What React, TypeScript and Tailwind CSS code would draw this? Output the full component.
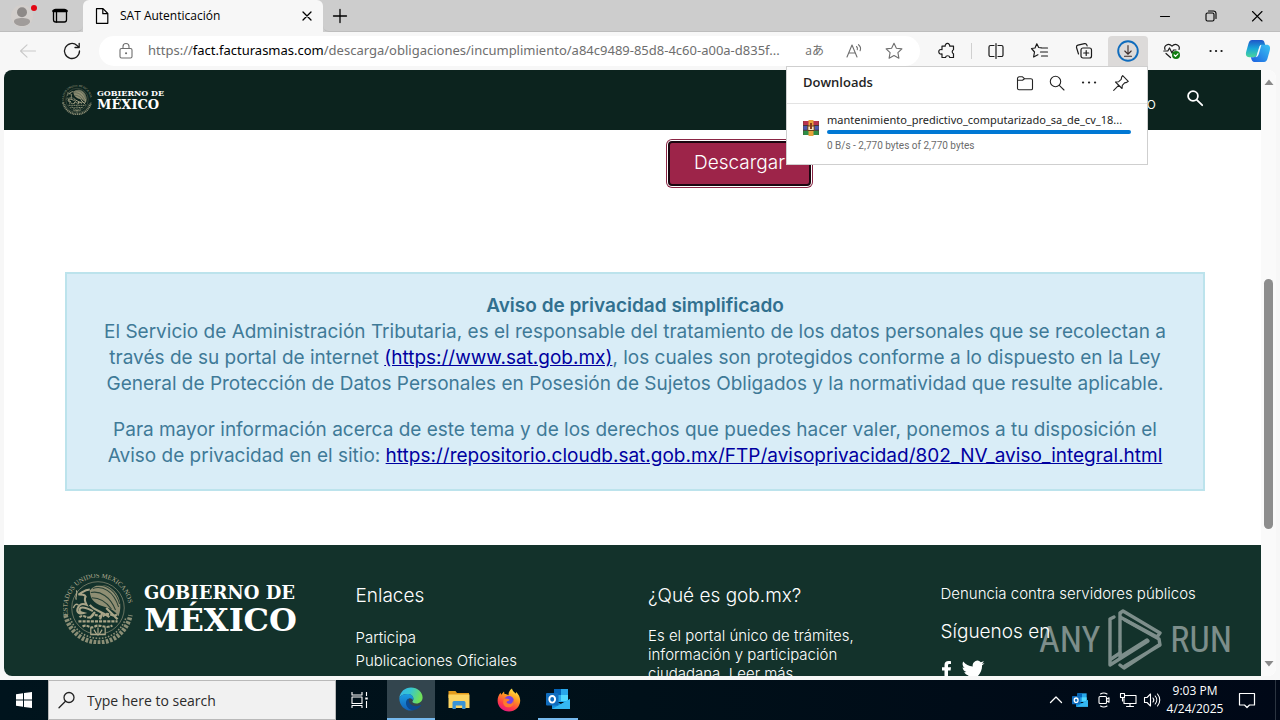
import type { ReactNode } from "react";

type IconProps = { className?: string; children: ReactNode; box?: string; width?: number };

function Icon({ className = "size-5", children, box = "0 0 20 20", width = 1.1 }: IconProps) {
  return (
    <svg
      className={"shrink-0 " + className}
      viewBox={box}
      fill="none"
      stroke="currentColor"
      strokeWidth={width}
      strokeLinecap="round"
      strokeLinejoin="round"
      aria-hidden="true"
    >
      {children}
    </svg>
  );
}

const STAR = "M10 2.2 12.4 7.2 17.9 7.9 13.9 11.7 14.9 17.2 10 14.6 5.1 17.2 6.1 11.7 2.1 7.9 7.6 7.2Z";

function TabStrip() {
  return (
    <div className="flex h-8 shrink-0 items-stretch bg-[#cdcdcd]">
      <div className="flex w-[83px] items-center rounded-br-md border-b border-[#bdbdbd] pl-[11px]">
        <button aria-label="Profile" className="relative size-[22px] rounded-full">
          <svg viewBox="0 0 22 22" className="size-[22px]">
            <circle cx="11" cy="11" r="11" fill="#d3cfcc" />
            <circle cx="11" cy="7.3" r="5" fill="#8d8987" />
            <path d="M3 16.5C3 13.8 7 13 11 13s8 .8 8 3.5S15 21 11 21s-8-1.800-8-4.500Z" fill="#a09c9a" />
          </svg>
          <span className="absolute top-0 -right-1 size-1.5 rounded-full bg-[#e30613]" />
        </button>
        <button aria-label="Tab actions" className="ml-[17px]">
          <Icon className="size-5" width={1.3}>
            <rect x="3.500" y="3.500" width="13" height="12.500" rx="2.200" />
            <path d="M3.500 5h13" strokeWidth="2.600" />
            <path d="M6.500 5.500v10.500" />
          </Icon>
        </button>
      </div>
      <div className="flex w-60 items-center rounded-t-md bg-[#f7f7f7] pr-2 pl-[9px]">
        <Icon className="size-5" width={1.2}>
          <path d="M4.500 2.700h6.500l4.800 4.800v9.800H4.500ZM10.800 2.900v4.800h4.800" />
        </Icon>
        <span className="ml-2 flex-1 text-[12px] text-black">SAT Autenticación</span>
        <button aria-label="Close tab">
          <Icon className="size-4" box="0 0 16 16" width={1.3}>
            <path d="m4 4 8 8M12 4l-8 8" />
          </Icon>
        </button>
      </div>
      <div className="flex flex-1 items-center justify-between rounded-bl-md border-b border-[#bdbdbd] pl-[7px]">
        <button aria-label="New tab">
          <Icon width={1.3}>
            <path d="M10 3.500v13M3.500 10h13" />
          </Icon>
        </button>
        <div className="flex items-center gap-[30px] pr-[15px]">
          <button aria-label="Minimize">
            <Icon className="size-4" box="0 0 16 16">
              <path d="M3.500 8.500h9" />
            </Icon>
          </button>
          <button aria-label="Restore">
            <Icon className="size-4" box="0 0 16 16">
              <rect x="3" y="5" width="8" height="8" rx="1.500" />
              <path d="M5.500 3h5A2.500 2.500 0 0 1 13 5.500v5" />
            </Icon>
          </button>
          <button aria-label="Close">
            <Icon className="size-4" box="0 0 16 16">
              <path d="m3.500 3.500 9.500 9.500M13 3.500 3.500 13" />
            </Icon>
          </button>
        </div>
      </div>
    </div>
  );
}

function DownloadsPopup() {
  return (
    <section
      aria-label="Downloads"
      className="absolute top-full right-0 z-20 w-[362px] border border-[#cfcfcf] bg-white pb-2.5 text-left text-[#242424]"
    >
      <div className="flex h-[37px] items-center border-b border-[#e3e3e3] pr-4 pb-1 pl-4">
        <h2 className="flex-1 text-[13px] font-semibold">Downloads</h2>
        <div className="flex items-center gap-3">
          <button aria-label="Open downloads folder">
            <Icon>
              <path d="M2.500 15.500v-10a1.700 1.700 0 0 1 1.700-1.700h3.300l2 1.900h6.300a1.700 1.700 0 0 1 1.700 1.700v8.100a1.300 1.300 0 0 1-1.300 1.300H4a1.500 1.500 0 0 1-1.500-1.300ZM2.700 7.200h4.800l2-1.500" />
            </Icon>
          </button>
          <button aria-label="Search downloads">
            <Icon>
              <circle cx="8.500" cy="8.500" r="5.200" />
              <path d="m12.300 12.300 4.700 4.700" />
            </Icon>
          </button>
          <button aria-label="More options">
            <Icon>
              <path d="M4 9.500h.1M10 9.500h.1M16 9.500h.1" strokeWidth="2.200" />
            </Icon>
          </button>
          <button aria-label="Pin downloads">
            <Icon>
              <path d="m11.700 2.700 5.600 5.600-1.500 1.100-2.200.5-2.300 2.500-.3 3.100-6.500-6.500 3.200-.3 2.500-2.300.4-2.200ZM7.600 12.400l-4.900 4.900" />
            </Icon>
          </button>
        </div>
      </div>
      <div className="flex items-start gap-2 pt-2 pr-4 pl-4">
        <svg viewBox="0 0 16 16" className="mt-2 size-4 shrink-0" aria-hidden="true">
          <path d="M0 1h16v4.500H0Z" fill="#b8324e" />
          <path d="M0 5.500h16v5H0Z" fill="#4a58b0" />
          <path d="M0 10.500h16V15H0Z" fill="#2e8d46" />
          <path d="M0 5.500h16M0 10.300h16" stroke="#30231c" strokeWidth=".8" />
          <path d="M5.500 0h5v16h-5Z" fill="#e9a23c" />
          <path d="M4.800 6h6.400v4.500H4.800Z" fill="#f5e3c0" stroke="#6b3d1a" />
          <path d="M7 3h2v6H7Z" fill="#8a3c1c" />
          <path d="M0 1v14M16 1v14" stroke="#5b3a2c" strokeWidth=".6" />
        </svg>
        <div className="min-w-0 flex-1">
          <p className="h-[18px] font-['Noto_Sans',sans-serif] text-[11px] leading-4 whitespace-nowrap">
            mantenimiento_predictivo_computarizado_sa_de_cv_18...
          </p>
          <div className="h-1 rounded-full bg-[#0078d4]" />
          <p className="mt-1 font-['Roboto',sans-serif] text-[10px] leading-4 text-[#6b6b6b]">
            0 B/s - 2,770 bytes of 2,770 bytes
          </p>
        </div>
      </div>
    </section>
  );
}

function CopilotLogo() {
  return (
    <svg viewBox="0 0 26 24" className="h-6 w-[26px]" aria-hidden="true">
      <defs>
        <linearGradient id="cpA" x1="0" y1="0" x2="0" y2="1">
          <stop offset="0" stopColor="#1f56c9" />
          <stop offset=".5" stopColor="#19a7d8" />
          <stop offset="1" stopColor="#4bd59a" />
        </linearGradient>
        <linearGradient id="cpB" x1="1" y1="0" x2="0" y2="1">
          <stop offset="0" stopColor="#39c5f3" />
          <stop offset="1" stopColor="#1c5fe0" />
        </linearGradient>
      </defs>
      <path d="M7 1h9.500c2 0 2.600 1.200 3.200 3.200l.6 2h-2.600c-2 0-3 1-3.600 3l-2.200 7c-.5 1.500-1.500 2-3 2H4.200C1.500 18.200.3 16 1.200 12.800L3.500 4.500C4.200 2.200 5 1 7 1Z" fill="url(#cpA)" />
      <path d="M19 23H9.500c-2 0-2.600-1.200-3.200-3.200l-.5-1.600h2.600c2 0 3-1 3.600-3l2.200-7c.5-1.500 1.500-2.400 3-2.400h4.600c2.700 0 3.900 2.200 3 5.400l-2.300 8.300C21.800 21.800 21 23 19 23Z" fill="url(#cpB)" />
      <path d="m12.200 14.500 2-6.300c.4-1.300 1.200-2.200 2.200-2.400l-2.700 9.400c-.5 1.600-1.300 2.700-3 3 .8-.8 1.100-2 1.500-3.700Z" fill="#eefaff" />
    </svg>
  );
}

function Toolbar() {
  return (
    <div className="flex h-[38px] shrink-0 items-center bg-[#f7f7f7] text-[#1b1b1b]">
      <button aria-label="Back" className="ml-[18px] text-[#c9c9c9]">
        <Icon>
          <path d="M17.500 10H2.800M9 3.800 2.500 10 9 16.200" />
        </Icon>
      </button>
      <button aria-label="Refresh" className="ml-[23px]">
        <Icon className="size-[22px]" box="0 0 22 22" width={1.3}>
          <path d="M18.500 11a7.500 7.500 0 1 1-2.500-5.600l2 2M18.200 3.300v4.200H14" />
        </Icon>
      </button>
      <div className="ml-4 flex h-[30px] min-w-0 flex-1 items-center rounded-full bg-white pr-4 pl-[17px] text-[#6e6e6e]">
        <button aria-label="Site information">
          <Icon>
            <rect x="4" y="7.500" width="12" height="9.500" rx="1.500" />
            <path d="M7 7.300V5.500a3 3 0 0 1 6 0v1.800" />
            <path d="M10 12.200h.1" strokeWidth="2" />
          </Icon>
        </button>
        <div
          role="textbox"
          aria-label="Address"
          contentEditable
          suppressContentEditableWarning
          className="ml-3 min-w-0 flex-1 overflow-hidden font-['Noto_Sans',sans-serif] text-[13px] whitespace-nowrap text-[#6e6e6e]"
        >
          https://<span className="text-black">fact.facturasmas.com</span>
          /descarga/obligaciones/incumplimiento/a84c9489-85d8-4c60-a00a-d835f...
        </div>
        <button aria-label="Translate" className="ml-3 text-[12px] leading-5 text-[#6e6e6e]">
          aあ
        </button>
        <button aria-label="Read aloud" className="ml-5">
          <Icon>
            <path d="M3 16 8 4l5 12M4.700 12h6.600M12.500 5.500c1 .9 1.200 2 .8 3.200M14.500 3.700c2 1.600 2.500 3.800 1.600 6" />
          </Icon>
        </button>
        <button aria-label="Add to favorites" className="ml-5">
          <Icon>
            <path d={STAR} />
          </Icon>
        </button>
      </div>
      <div className="flex shrink-0 items-center">
        <button aria-label="Extensions" className="ml-[18px]">
          <Icon width={1.2}>
            <path d="M4 5.200h3.200a2.300 2.300 0 1 1 4.500 0h3.800v3.500a2.200 2.200 0 0 0 0 4v3.800h-3.700a2.200 2.200 0 0 0-4.300 0H4v-3.600a2.300 2.300 0 1 1 0-4.200Z" />
          </Icon>
        </button>
        <span className="ml-[13px] h-4 w-px bg-[#d0d0d0]" />
        <button aria-label="Split screen" className="ml-[14px]">
          <Icon width={1.2}>
            <path d="M8 4.500H4.500A1.500 1.500 0 0 0 3 6v8a1.500 1.500 0 0 0 1.500 1.500H8M12 4.500h3.500A1.500 1.500 0 0 1 17 6v8a1.500 1.500 0 0 1-1.500 1.500H12M10 2.500v15" />
          </Icon>
        </button>
        <button aria-label="Favorites" className="ml-6">
          <Icon width={1.2}>
            <path d="M11.500 6.800 8.700 6.500 6.800 2.800 5 7 1.500 7.500l3 3.500-.9 5 4.300-2.300M11.500 7h6M10.500 11h7M11.500 15h6" />
          </Icon>
        </button>
        <button aria-label="Collections" className="ml-6">
          <Icon width={1.2}>
            <rect x="7" y="7" width="10.500" height="10" rx="2" />
            <path d="M12.200 9.500v5M9.700 12h5M4.500 13 2.500 6.500a2 2 0 0 1 1.400-2.300l6.600-1.600a2 2 0 0 1 2.300 1.300l.3 1" />
          </Icon>
        </button>
        <div className="relative flex pl-3.5">
          <button aria-label="Downloads in progress" className="flex h-[30px] w-10 items-center justify-center rounded-t-[4px] bg-[#dcdad9]">
            <svg viewBox="0 0 22 22" className="size-[22px]" fill="none" strokeLinecap="round">
              <circle cx="11" cy="11" r="9.800" stroke="#0f6cbd" strokeWidth="1.900" />
              <path d="M11 5.500v8.500M7.800 11l3.200 3.200 3.200-3.200M7.500 16.200h7" stroke="#3b2c2a" strokeWidth="1.100" />
            </svg>
          </button>
          <DownloadsPopup />
        </div>
        <button aria-label="Browser essentials" className="ml-[14px]">
          <Icon width={1.2}>
            <path d="M3 8.500C1.500 4.500 6.500 1.500 10 5.200c3.500-3.700 8.500-.7 7 3.300M1.800 10h4l1.700-3 2.500 5 1.500-3h2.500M4 12.500l4.500 4" />
            <circle cx="14" cy="14" r="4" fill="#107c10" stroke="none" />
            <path d="m12.200 14 1.300 1.300 2.400-2.500" stroke="white" />
          </Icon>
        </button>
        <button aria-label="Settings and more" className="ml-6">
          <Icon>
            <path d="M4.500 10h.1M10 10h.1M15.500 10h.1" strokeWidth="2.200" />
          </Icon>
        </button>
        <button aria-label="Copilot" className="mr-[9px] ml-[19px]">
          <CopilotLogo />
        </button>
      </div>
    </div>
  );
}

function Emblem({ className }: { className: string }) {
  return (
    <svg viewBox="1 1 68 68" className={"shrink-0 " + className} fill="none" stroke="#a9a588" aria-hidden="true">
      <defs>
        <path id="sealArc" d="M6.500 43A29.800 29.800 0 1 1 63.500 43" />
      </defs>
      <text fontSize="6.500" fill="#b3af93" stroke="none" className="font-['Liberation_Serif',serif]">
        <textPath href="#sealArc" startOffset="2">ESTADOS UNIDOS MEXICANOS</textPath>
      </text>
      <circle cx="35" cy="34" r="25.500" strokeWidth=".8" opacity=".7" />
      <path d="M3.500 41C6 54 18 67 35 67.500S64 54 66.500 41" strokeWidth="4.500" strokeDasharray="2.600 1.400" opacity=".8" />
      <path d="M8 44c4 11 14 19 27 19.500S58 55 62 44" strokeWidth="1.600" strokeDasharray="1.500 1.500" opacity=".8" />
      <path d="M27 17c5-6 14-7 21-2 8 6 11 16 7 27-4-6-9-8-13-9-8-2-15-6-15-16Z" fill="#8f8e73" stroke="none" />
      <path d="M30 15c9-3 20 2 25 18M28 19c9-2 19 4 24 17M29 24c8 0 14 4 19 11M34 12c10-1 19 6 22 18" stroke="#263f34" strokeWidth="1" />
      <path d="M27 16c-5 0-7 3-11 5 4 0 6 0 7 2-2 3 0 6 1 8-5-2-8 0-9 4s3 5 6 4c-4-1-5-3-3-5 3-2 8 1 12 3" strokeWidth="2" />
      <path d="M14 26c-2-3 2-6 0-9M16 31c-3-2-4 1-5 3" strokeWidth="1.300" />
      <path d="M27 31c5 6 13 7 19 12M32 38l-5 6M39 39l-2 6M43 34l11 11" strokeWidth="2.200" />
      <path d="M17 43c4-4 8 3 12-1s8 3 12-1 8 3 13-1M16 47h38M20 52c5-3 7 3 12 0s9 3 17-1" strokeWidth="2" strokeDasharray="3 1" />
      <path d="M28 53v7h14v-7M31 55l3 5M39 55l-3 5M35 53v8" strokeWidth="1.200" />
    </svg>
  );
}

function SiteHeader() {
  return (
    <header className="flex h-[60px] shrink-0 items-center bg-[#0c231e] pr-[57px] pl-[58px] text-white">
      <Emblem className="size-[30px]" />
      <p className="ml-[5px] font-['DejaVu_Serif',serif] font-bold">
        <span className="block text-[8px] leading-[10px]">GOBIERNO DE</span>
        <span className="block text-[13px] leading-[14px]">MÉXICO</span>
      </p>
      <nav className="flex flex-1 items-center justify-end">
        <a href="#gobierno" className="mt-1.5 text-[16px] font-light">Gobierno</a>
        <button aria-label="Buscar" className="ml-[30px] pb-1">
          <Icon className="size-[18px]" box="0 0 18 18" width={1.8}>
            <circle cx="7" cy="7" r="4.900" />
            <path d="m10.800 10.800 5.400 5.400" />
          </Icon>
        </button>
      </nav>
    </header>
  );
}

function PrivacyNotice() {
  return (
    <section className="mt-[86px] border-2 border-[#bce3ec] bg-[#d9edf7] pt-[19px] pb-5 text-center text-[19px] leading-[26px] font-normal whitespace-nowrap text-[#3f7a97]">
      <h1 className="font-semibold text-[#31708f]">Aviso de privacidad simplificado</h1>
      <p>
        El Servicio de Administración Tributaria, es el responsable del tratamiento de los datos personales que se recolectan a
        <br />
        través de su portal de internet{" "}
        <a href="https://www.sat.gob.mx" className="text-[#0000a0] underline">(https://www.sat.gob.mx)</a>, los cuales son
        protegidos conforme a lo dispuesto en la Ley
        <br />
        General de Protección de Datos Personales en Posesión de Sujetos Obligados y la normatividad que resulte aplicable.
      </p>
      <p className="mt-5">
        Para mayor información acerca de este tema y de los derechos que puedes hacer valer, ponemos a tu disposición el
        <br />
        Aviso de privacidad en el sitio:{" "}
        <a
          href="https://repositorio.cloudb.sat.gob.mx/FTP/avisoprivacidad/802_NV_aviso_integral.html"
          className="text-[#0000a0] underline"
        >
          https://repositorio.cloudb.sat.gob.mx/FTP/avisoprivacidad/802_NV_aviso_integral.html
        </a>
      </p>
    </section>
  );
}

function SiteFooter() {
  return (
    <footer className="mt-[54px] grid shrink-0 grid-cols-4 bg-[#13322b] pt-[29px] pr-7 pb-10 pl-[59px] text-[15px] font-light text-white">
      <div className="flex items-start">
        <Emblem className="size-[70px]" />
        <p className="mt-2 ml-[11px] font-['DejaVu_Serif',serif] font-bold">
          <span className="block text-[18px] leading-[22px] whitespace-nowrap">GOBIERNO DE</span>
          <span className="block text-[32px] leading-[32px]">MÉXICO</span>
        </p>
      </div>
      <div>
        <h2 className="mt-2 text-[19px] leading-7">Enlaces</h2>
        <ul className="mt-4 leading-[23px]">
          <li><a href="#participa">Participa</a></li>
          <li><a href="#publicaciones">Publicaciones Oficiales</a></li>
        </ul>
      </div>
      <div>
        <h2 className="mt-2 text-[19px] leading-7">¿Qué es gob.mx?</h2>
        <p className="mt-4 leading-[19px]">
          Es el portal único de trámites,
          <br />
          información y participación
          <br />
          ciudadana. <a href="#leer">Leer más</a>
        </p>
      </div>
      <div>
        <a href="#denuncia" className="mt-2 block leading-6">Denuncia contra servidores públicos</a>
        <h2 className="mt-3 text-[19px] leading-7">Síguenos en</h2>
        <div className="mt-3.5 flex gap-2">
          <a href="#facebook" aria-label="Facebook">
            <svg viewBox="0 0 12 20" className="h-5 w-3" fill="white">
              <path d="M3.500 19v-8.500H1V7.200h2.500V5c0-2.700 1.500-4 4-4 1 0 2 .1 2.500.2V4H8.500C7.300 4 7 4.600 7 5.400v1.800h3l-.4 3.300H7V19Z" />
            </svg>
          </a>
          <a href="#twitter" aria-label="Twitter">
            <svg viewBox="0 0 24 20" className="h-5 w-6" fill="white">
              <path d="M23.500 2.900c-.8.400-1.700.6-2.700.8 1-.6 1.700-1.500 2-2.600-.9.500-1.900.9-3 1.100A4.700 4.700 0 0 0 11.800 6.500C7.900 6.300 4.500 4.400 2.200 1.600 1 3.700 1.600 6.400 3.700 7.900c-.8 0-1.500-.2-2.100-.6 0 2.200 1.600 4.200 3.800 4.700-.7.200-1.400.2-2.100.1.600 1.900 2.300 3.200 4.400 3.300A9.500 9.500 0 0 1 .7 17.300c11 6 20.600-1.500 20.400-12 .9-.6 1.800-1.500 2.400-2.400Z" />
            </svg>
          </a>
        </div>
      </div>
    </footer>
  );
}

function Watermark() {
  return (
    <div className="pointer-events-none absolute right-[44px] bottom-1 flex h-16 items-center gap-2 text-white opacity-45">
      <span className="font-['Roboto_Condensed','Liberation_Sans_Narrow',sans-serif] text-[36px]">ANY</span>
      <svg viewBox="0 0 54 62" className="h-[62px] w-[54px]" fill="none" stroke="currentColor" strokeWidth="3.400" strokeLinejoin="round" strokeLinecap="round">
        <path d="M6 8 2 10v46l38-24" />
        <path d="M12 37V4l3-2 37 22-3 4-37-20M3 50l9-6" />
        <path d="M12 38v10L39 31M17 57l35-21-1-6-34-19M51 36 16 59l-4-3" />
      </svg>
      <span className="font-['Roboto_Condensed','Liberation_Sans_Narrow',sans-serif] text-[36px]">RUN</span>
    </div>
  );
}

function Scrollbar() {
  return (
    <div className="flex w-[15px] shrink-0 flex-col items-center rounded-r-lg bg-[#fafafa] py-2">
      <svg viewBox="0 0 10 8" className="h-2 w-2.5" fill="#8a8a8a"><path d="M5 1.500 9.500 7h-9Z" /></svg>
      <div className="grow-[192]" />
      <div className="w-[9px] grow-[249] rounded-full bg-[#8d8d8d]" />
      <div className="grow-[131]" />
      <svg viewBox="0 0 10 8" className="h-2 w-2.5" fill="#8a8a8a"><path d="M5 6.500.5 1h9Z" /></svg>
    </div>
  );
}

function OutlookLogo({ className }: { className: string }) {
  return (
    <svg viewBox="0 0 24 24" className={className} aria-hidden="true">
      <path d="M8 2h14v13H8Z" fill="#28a8ea" />
      <path d="M8 2h7v6H8Z" fill="#0364b8" />
      <path d="M15 8h7v6h-7Z" fill="#50d9ff" />
      <path d="M6 12l9 5 9-5v10H6Z" fill="#1490df" />
      <path d="M6 22 24 12v10Z" fill="#35b8f1" />
      <rect x="0" y="6" width="12.500" height="12.500" rx="1" fill="#0f6cbd" />
      <ellipse cx="6.200" cy="12.300" rx="2.900" ry="3.300" fill="none" stroke="white" strokeWidth="1.900" />
    </svg>
  );
}

function Taskbar() {
  return (
    <div className="flex h-10 shrink-0 items-stretch bg-linear-to-r from-[#00141d] via-[#001019] to-[#000817] text-white">
      <button aria-label="Start" className="flex w-12 items-center justify-center">
        <svg viewBox="0 0 16 16" className="size-4" fill="white">
          <path d="M0 2.300 7 1.200v6.300H0ZM8 1.100 16 0v7.500H8ZM0 8.500h7v6.300l-7-1ZM8 8.500h8V16l-8-1.100Z" />
        </svg>
      </button>
      <label className="flex w-72 items-center gap-2.5 border border-[#b9b9b9] bg-[#f1f1f1] pl-2 text-[#222]">
        <Icon width={1.3}>
          <circle cx="12" cy="7.500" r="5" />
          <path d="m8.500 11.200-6.500 6.500" />
        </Icon>
        <input
          type="text"
          aria-label="Search"
          placeholder="Type here to search"
          className="min-w-0 flex-1 bg-transparent text-[14px] outline-none placeholder:text-[#2b2b2b]"
        />
      </label>
      <button aria-label="Task view" className="flex w-[51px] items-center justify-center pr-[3px]">
        <Icon className="size-[18px]" box="0 0 18 18">
          <path d="M1 1v3h10V1M1 6h10v6.500H1ZM1 17v-2.500h10V17M15.500 1v4M15.500 10v7" strokeLinecap="butt" />
          <path d="M15.500 6.500v2" strokeWidth="2.500" strokeLinecap="butt" />
        </Icon>
      </button>
      <button aria-label="Microsoft Edge" className="flex w-12 items-center justify-center border-b-2 border-[#76b9ed] bg-[#33454e]">
        <svg viewBox="0 0 24 24" className="size-6">
          <defs>
            <linearGradient id="edA" x1="0" y1="0" x2="1" y2=".3">
              <stop offset="0" stopColor="#35b5ec" />
              <stop offset=".5" stopColor="#37c6d0" />
              <stop offset="1" stopColor="#6fe05a" />
            </linearGradient>
            <linearGradient id="edB" x1="0" y1="0" x2="0" y2="1">
              <stop offset="0" stopColor="#1b9de2" />
              <stop offset="1" stopColor="#1260b8" />
            </linearGradient>
          </defs>
          <path d="M.3 11C1.200 4.500 6 .4 12 .4c6.500 0 11.600 4.600 11.600 10 0 3.600-2.800 6-6.200 6-2.900 0-4-1-4-1.700 0-.6 1-1 1-3 0-2.600-2.500-4.700-6-4.700C4.500 7 1.500 8.500.3 11Z" fill="url(#edA)" />
          <path d="M.3 11C1.500 8.500 4.500 7 8.400 7c3.500 0 6 2.100 6 4.700 0 .5-.2 1.200-.4 1.500-.6-1.400-2-2.200-3.500-2-2.700 1-3.500 5.500-1 8.600 2 2.500 4.500 3.300 6.500 3-7.500 3-15.700-2.500-15.700-11.800Z" fill="url(#edB)" />
          <path d="M9.500 11.500c-3 1.500-3.400 6-.8 9.100 3.600 4.300 10 2.900 13.300-2 .3-.5-.1-.8-.6-.5-4.800 2.500-10.500.2-11.500-3.600-.3-1.200-.2-2.200-.4-3Z" fill="#0c4a92" />
        </svg>
      </button>
      <button aria-label="File Explorer" className="flex w-12 items-center justify-center">
        <svg viewBox="0 0 22 20" className="h-5 w-[22px]">
          <path d="M.5 1h7l1.500 2h12v5H.5Z" fill="#e39b1c" />
          <path d="M.5 4.500h21V18H.5Z" fill="#fcd462" />
          <path d="M4.500 19v-6.500A1.500 1.500 0 0 1 6 11h10a1.500 1.500 0 0 1 1.500 1.500V19h-3.300v-3.500H7.800V19Z" fill="#3a94d6" />
        </svg>
      </button>
      <button aria-label="Firefox" className="flex w-[51px] items-center justify-center">
        <svg viewBox="0 0 24 24" className="size-6">
          <defs>
            <linearGradient id="ffA" x1=".8" y1="0" x2=".3" y2="1">
              <stop offset="0" stopColor="#fff04a" />
              <stop offset=".4" stopColor="#ff9820" />
              <stop offset=".75" stopColor="#ff3b47" />
              <stop offset="1" stopColor="#e31587" />
            </linearGradient>
          </defs>
          <path d="M15 .5c.3 2.500 2 3 3.500 5 .5-.2.600-1 .4-1.700 2.800 2.500 4.400 5.800 4.300 9C23 19 18 23.600 12 23.600S.6 19 .6 12.800c0-3 1-6 2.900-8l.7 2L7 3.500 7.500 6c2 0 3 .6 4 1.300C11.500 4.500 12.500 2 15 .5Z" fill="url(#ffA)" />
          <circle cx="12" cy="13" r="5" fill="#7542e5" />
          <path d="M7 11c2-1 3.500 0 5 .3 1 .2.600 1.500-1.500 2-1 .2-1.500 1.600.5 2.300 3 1 5.500-1 5-4.600 2 3 .5 8.300-4.500 8.300S5 14.500 7 11Z" fill="#ff7a2c" />
        </svg>
      </button>
      <button aria-label="Outlook" className="mx-1 flex w-10 items-center justify-center border-b-2 border-[#76b9ed]">
        <OutlookLogo className="size-6" />
      </button>
      <div className="flex-1" />
      <div className="flex items-center">
        <button aria-label="Show hidden icons">
          <Icon className="size-4" box="0 0 16 16" width={1.3}>
            <path d="m2.500 10.500 5.500-5.500 5.500 5.500" />
          </Icon>
        </button>
        <button aria-label="Outlook notifications" className="ml-2"><OutlookLogo className="size-4" /></button>
        <button aria-label="Meet now" className="ml-[7px]">
          <Icon className="size-[18px]" box="0 0 18 18">
            <rect x="4" y="5.500" width="7.500" height="7" rx="1" />
            <path d="m11.500 8.300 2.500-1.500v4.500l-2.500-1.500M5.500 3c2-1.300 4.500-1.300 6.500 0M5.500 15c2 1.300 4.500 1.300 6.500 0" />
          </Icon>
        </button>
        <button aria-label="Network" className="ml-1.5">
          <Icon className="size-[18px]" box="0 0 18 18">
            <path d="M6.500 4.500H17v8H5v-5M11 12.500v3M7.500 15.500h7M1.500 2.500h4v4h-4ZM3.500 6.500v3.500" />
          </Icon>
        </button>
        <button aria-label="Volume" className="ml-1.5">
          <Icon className="size-[18px]" box="0 0 18 18">
            <path d="M1.500 6.500h2.500L7.500 3v12L4 11.500H1.500ZM10 7c1 1.200 1 2.800 0 4M12.200 5c2 2.300 2 5.700 0 8M14.500 3c3 3.500 3 8.500 0 12" />
          </Icon>
        </button>
        <div className="ml-1.5 w-14 text-center text-[12px] leading-[18px] whitespace-nowrap">
          <p>9:03 PM</p>
          <p className="-mx-2">4/24/2025</p>
        </div>
        <button aria-label="Notifications" className="mr-[19px] ml-[15px]">
          <Icon className="size-[18px]" box="0 0 18 18" width={1.2}>
            <path d="M1.500 2.500h15v11.500h-5L9 16.500 6.500 14h-5Z" />
          </Icon>
        </button>
        <span className="mr-1 h-10 w-px bg-[#2b3440]" />
      </div>
    </div>
  );
}

export default function App() {
  return (
    <div className="flex h-screen flex-col overflow-hidden bg-[#f7f7f7] font-['Open_Sans','Noto_Sans_CJK_JP',sans-serif]">
      <TabStrip />
      <Toolbar />
      <div className="relative mr-1 mb-1 ml-1 flex min-h-0 flex-1 overflow-hidden rounded-lg bg-white">
        <main className="flex min-w-0 flex-1 flex-col overflow-hidden font-['Inter',sans-serif]">
          <SiteHeader />
          <div className="shrink-0 pt-[9px] pr-14 pl-[61px]">
            <div className="grid grid-cols-2">
              <div className="col-start-2 pt-0.5 pl-[33px]">
                <button className="block h-[45px] w-[143px] rounded-[4px] border-2 border-[#1c0610] bg-[#9d2449] text-[19px] font-light text-white shadow-[0_0_0_1px_#ffffff,0_0_0_2px_#8a2544]">
                  Descargar
                </button>
              </div>
            </div>
            <PrivacyNotice />
          </div>
          <SiteFooter />
        </main>
        <Scrollbar />
        <Watermark />
      </div>
      <Taskbar />
    </div>
  );
}
